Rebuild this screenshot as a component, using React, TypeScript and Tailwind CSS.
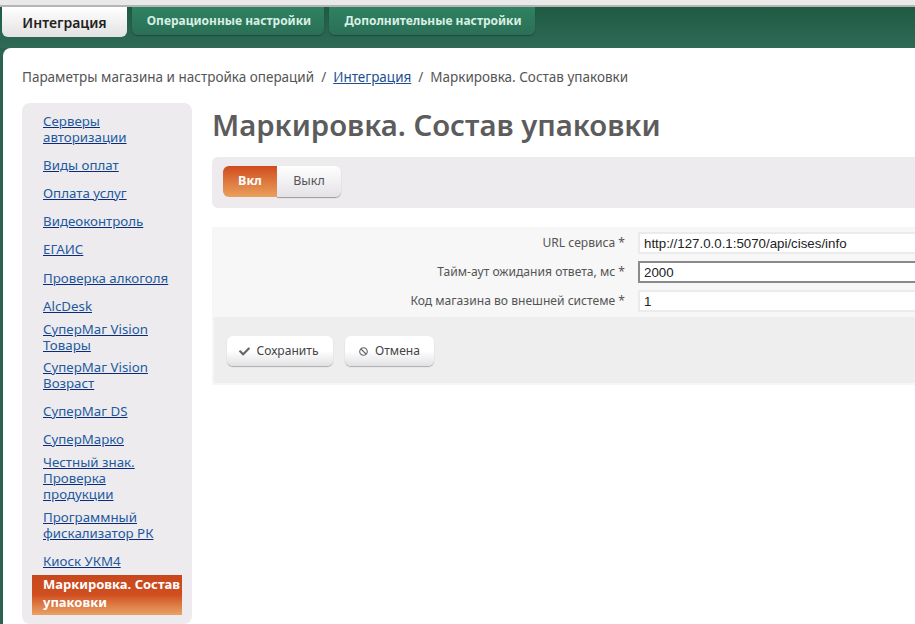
import { FaBan, FaCheck } from "react-icons/fa";

const menu = [
    { label: "Серверы авторизации", h: "h-[44px]", w: "w-[100px]" },
    { label: "Виды оплат", h: "h-[28px]", w: "" },
    { label: "Оплата услуг", h: "h-[28px]", w: "" },
    { label: "Видеоконтроль", h: "h-[28px]", w: "" },
    { label: "ЕГАИС", h: "h-[28px]", w: "" },
    { label: "Проверка алкоголя", h: "h-[29px]", w: "" },
    { label: "AlcDesk", h: "h-[28px]", w: "" },
    { label: "СуперМаг Vision Товары", h: "h-[34px]", w: "w-[120px]" },
    { label: "СуперМаг Vision Возраст", h: "h-[42px]", w: "w-[120px]" },
    { label: "СуперМаг DS", h: "h-[30px]", w: "" },
    { label: "СуперМарко", h: "h-[26px]", w: "" },
    { label: "Честный знак. Проверка продукции", h: "h-[52px]", w: "w-[100px]" },
    { label: "Программный фискализатор РК", h: "h-[42px]", w: "w-[125px]" },
    { label: "Киоск УКМ4", h: "h-[29px]", w: "" },
];

const fields = [
    { label: "URL сервиса *", value: "http://127.0.0.1:5070/api/cises/info", focus: false },
    { label: "Тайм-аут ожидания ответа, мс *", value: "2000", focus: true },
    { label: "Код магазина во внешней системе *", value: "1", focus: false },
];

export default function App() {
    return (
        <div className="h-[624px] w-[915px] overflow-hidden bg-[#2b6350] font-['Noto_Sans',sans-serif] text-[12.1px]">
            <div className="h-[7px] border-b-2 border-[#b5b5b5] bg-[#e9e9e9]" />

            <div className="flex h-[41px] items-start bg-gradient-to-b from-[#1f5a45] to-[#2f6a56] pl-[2px]">
                <div className="flex h-[30px] w-[125px] items-center justify-center rounded-b-md bg-gradient-to-b from-white to-[#e2e2e2] text-[14px] font-semibold text-[#222]">
                    Интеграция
                </div>
                <div className="ml-[5px] flex h-[28px] w-[192px] items-center justify-center rounded-b-md bg-gradient-to-b from-[#2f8262] to-[#2b6f56] pl-[2px] text-[12px] font-bold text-[#d8efe4] shadow-[0_1px_1px_#1d4a3a]">
                    Операционные настройки
                </div>
                <div className="ml-[5px] flex h-[28px] w-[206px] items-center justify-center rounded-b-md bg-gradient-to-b from-[#2f8262] to-[#2b6f56] pl-[2px] text-[12px] font-bold text-[#d8efe4] shadow-[0_1px_1px_#1d4a3a]">
                    Дополнительные настройки
                </div>
            </div>

            <div className="ml-[3px] h-[576px] rounded-tl-lg bg-white pl-[19px]">
                <div className="flex h-[55px] items-start gap-[7px] pt-[20px] text-[13.5px] leading-[18px] text-[#555]">
                    <span>Параметры магазина и настройка операций</span>
                    <span>/</span>
                    <span className="text-[#1d4f91] underline">Интеграция</span>
                    <span>/</span>
                    <span>Маркировка. Состав упаковки</span>
                </div>

                <div className="flex">
                    <aside className="h-[521px] w-[170px] shrink-0 rounded-lg bg-[#eeebee] pt-[4px] text-[13.3px] leading-[16px]">
                        {menu.map((item) => (
                            <div key={item.label} className={`flex items-center pl-[21px] ${item.h}`}>
                                <a className={`text-[#1d5a9e] underline decoration-[#0a2a80] ${item.w}`}>{item.label}</a>
                            </div>
                        ))}
                        <div className="mx-[10px] h-[40px] bg-gradient-to-b from-[#c9461c] via-[#cf4f20] to-[#e9a364] pl-[11px] text-[13px] leading-[18px] font-bold text-white">
                            Маркировка. Состав упаковки
                        </div>
                    </aside>

                    <main className="ml-[20px] w-[720px] shrink-0">
                        <h1 className="h-[54px] text-[29.3px] leading-[44px] font-semibold text-[#5c5c5c]">
                            Маркировка. Состав упаковки
                        </h1>

                        <div className="flex h-[51px] items-start rounded-l-md bg-[#eeebee] pt-[9px] pl-[11px] text-[12.5px]">
                            <div className="flex h-[31px] w-[80px] items-center justify-center rounded-l-md bg-gradient-to-b from-[#cf4a1c] to-[#e9a05c] pr-[26px] font-bold text-white">
                                Вкл
                            </div>
                            <div className="ml-[-26px] flex h-[31px] w-[64px] items-center justify-center rounded-r-md bg-gradient-to-b from-white to-[#e4e2e6] text-[#555] shadow-[0_1px_1px_#999]">
                                Выкл
                            </div>
                        </div>

                        <div className="mt-[19px] border-2 border-r-0 border-[#f6f6f6]">
                            <div className="flex h-[88px] flex-col gap-[7px] bg-[#f7f7f7] pt-[3px]">
                                {fields.map((f) => (
                                    <div key={f.label} className="flex h-[22px] items-center">
                                        <label className="w-[411px] text-right text-[#555]">{f.label}</label>
                                        <input
                                            readOnly
                                            value={f.value}
                                            className={`ml-[13px] h-[22px] flex-1 border-2 bg-white px-[4px] font-['Liberation_Sans',sans-serif] text-[13.3px] text-[#222] outline-none ${
                                                f.focus ? "border-[#8a8a8a]" : "border-[#ebebeb]"
                                            }`}
                                        />
                                    </div>
                                ))}
                            </div>
                            <div className="flex h-[66px] gap-[12px] bg-[#eeeeee] pt-[19px] pl-[13px]">
                                <button className="flex h-[30px] w-[106px] items-center justify-center gap-[6px] rounded-md bg-gradient-to-b from-white via-white to-[#e2e0e3] pr-[2px] text-[#444] shadow-[0_1px_1px_#aaa]">
                                    <FaCheck size={11} className="text-[#666]" />
                                    Сохранить
                                </button>
                                <button className="flex h-[30px] w-[89px] items-center justify-center gap-[7px] rounded-md bg-gradient-to-b from-white via-white to-[#e2e0e3] text-[#444] shadow-[0_1px_1px_#aaa]">
                                    <FaBan size={9} className="text-[#666]" />
                                    Отмена
                                </button>
                            </div>
                        </div>
                    </main>
                </div>
            </div>
        </div>
    );
}
